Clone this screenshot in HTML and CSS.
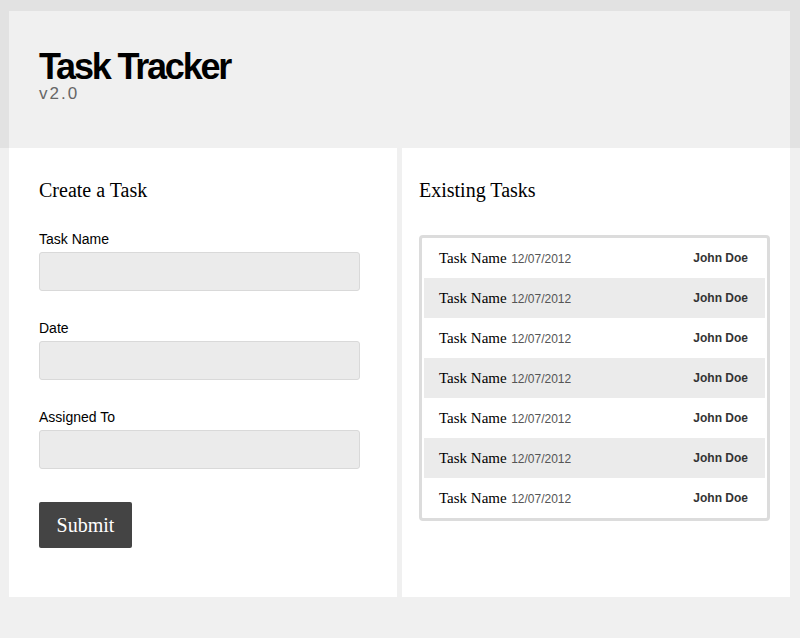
FILE: index.html
```html
<!DOCTYPE html>
<html>
<head>
<meta charset="utf-8">
<title>Task Tracker</title>
<link rel="stylesheet" href="styles.css">
</head>
<body>
<div class="top">
  <header class="header">
    <h1 class="title">Task Tracker</h1>
    <div class="version">v2.0</div>
  </header>
</div>
<main class="main">
  <section class="panel panel-form">
    <h2 class="panel-title">Create a Task</h2>
    <form class="form">
      <div class="field">
        <label class="label">Task Name</label>
        <input class="input" type="text">
      </div>
      <div class="field">
        <label class="label">Date</label>
        <input class="input" type="text">
      </div>
      <div class="field">
        <label class="label">Assigned To</label>
        <input class="input" type="text">
      </div>
      <button class="submit" type="button">Submit</button>
    </form>
  </section>
  <section class="panel panel-list">
    <h2 class="panel-title">Existing Tasks</h2>
    <ul class="tasks">
      <li class="task"><span class="task-info"><span class="task-name">Task Name</span> <span class="task-date">12/07/2012</span></span><span class="task-owner">John Doe</span></li>
      <li class="task"><span class="task-info"><span class="task-name">Task Name</span> <span class="task-date">12/07/2012</span></span><span class="task-owner">John Doe</span></li>
      <li class="task"><span class="task-info"><span class="task-name">Task Name</span> <span class="task-date">12/07/2012</span></span><span class="task-owner">John Doe</span></li>
      <li class="task"><span class="task-info"><span class="task-name">Task Name</span> <span class="task-date">12/07/2012</span></span><span class="task-owner">John Doe</span></li>
      <li class="task"><span class="task-info"><span class="task-name">Task Name</span> <span class="task-date">12/07/2012</span></span><span class="task-owner">John Doe</span></li>
      <li class="task"><span class="task-info"><span class="task-name">Task Name</span> <span class="task-date">12/07/2012</span></span><span class="task-owner">John Doe</span></li>
      <li class="task"><span class="task-info"><span class="task-name">Task Name</span> <span class="task-date">12/07/2012</span></span><span class="task-owner">John Doe</span></li>
    </ul>
  </section>
</main>
</body>
</html>
```
FILE: styles.css
```css
* { box-sizing: border-box; }
html, body {
  margin: 0;
  padding: 0;
  background: #f0f0f0;
  font-family: "Liberation Sans", Arial, sans-serif;
  color: #000;
}
.top {
  background: #e2e2e2;
  padding: 11px 10px 0 9px;
}
.header {
  background: #f0f0f0;
  height: 137px;
  padding: 39px 30px 0 30px;
}
.title {
  margin: 0;
  font-size: 36px;
  line-height: 34px;
  font-weight: bold;
  letter-spacing: -2.2px;
  color: #000;
}
.version {
  margin-top: 0;
  font-size: 17px;
  line-height: 20px;
  letter-spacing: 2px;
  color: #666;
}
.main {
  display: grid;
  grid-template-columns: 388px 388px;
  column-gap: 5px;
  padding: 0 10px 41px 9px;
}
.panel {
  background: #fff;
  height: 449px;
  padding-top: 30px;
}
.panel-form { padding-left: 30px; }
.panel-list { padding-left: 17px; padding-right: 20px; }
.panel-title {
  margin: 0;
  font-family: "Liberation Serif", "Times New Roman", serif;
  font-weight: normal;
  font-size: 20px;
  line-height: 24px;
  color: #000;
}
.form { margin-top: 29px; }
.field { margin-bottom: 29px; }
.label {
  display: block;
  font-size: 14px;
  line-height: 16px;
  margin-bottom: 5px;
  color: #000;
}
.input {
  display: block;
  width: 321px;
  height: 39px;
  margin: 0;
  background: #ebebeb;
  border: 1px solid #d9d9d9;
  border-radius: 3px;
  outline: none;
}
.submit {
  margin-top: 4px;
  width: 93px;
  height: 46px;
  background: #444;
  color: #fff;
  border: none;
  border-radius: 2px;
  font-family: "Liberation Serif", "Times New Roman", serif;
  font-size: 20px;
  padding: 0;
}
.tasks {
  list-style: none;
  margin: 33px 0 0 0;
  padding: 0 2px;
  width: 351px;
  border: 3px solid #dcdcdc;
  border-radius: 4px;
  background: #fff;
}
.task {
  display: flex;
  align-items: center;
  justify-content: space-between;
  height: 40px;
  padding: 0 17px 0 15px;
}
.task:nth-child(even) { background: #ebebeb; }
.task-name {
  font-family: "Liberation Serif", "Times New Roman", serif;
  font-size: 15px;
  color: #000;
}
.task-date {
  font-size: 12px;
  color: #555;
}
.task-owner {
  font-size: 12px;
  font-weight: bold;
  color: #333;
}
```
